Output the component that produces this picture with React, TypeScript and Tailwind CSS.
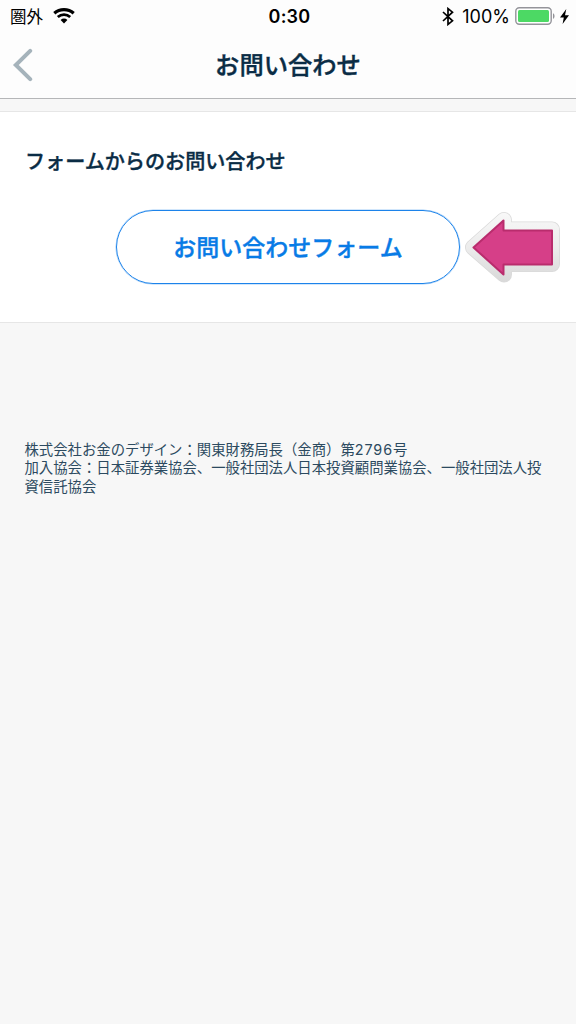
import React from "react";

const StatusBar = () => {
  return (
    <div className="grid h-8 grid-cols-3 items-center pr-[7px] pl-[10px] text-black">
      <div className="flex items-center gap-[10px]">
        <span className="text-[16.5px] leading-none">圏外</span>
        <svg width="22" height="16" viewBox="0 0 22 16" fill="none" stroke="currentColor">
          <path d="M1.3 5.3C6.8.5 15.2.5 20.7 5.3" strokeWidth="3.2" />
          <path d="M4.8 9C8.4 5.8 13.6 5.8 17.2 9" strokeWidth="2.8" />
          <path d="M7.6 11.9c2-1.8 4.8-1.8 6.8 0L11 15.4z" fill="currentColor" stroke="none" />
        </svg>
      </div>
      <span className="pt-px text-center font-['Inter','Noto_Sans_CJK_JP',sans-serif] text-[18px] leading-none font-semibold tracking-[0.2px]">
        0:30
      </span>
      <div className="flex items-center justify-end">
        <svg width="12" height="19" viewBox="0 0 12 19" fill="none" stroke="currentColor" strokeWidth="1.7">
          <path d="M1 5l9.5 8.8L6 17.4V1.6l4.5 3.6L1 14" />
        </svg>
        <span className="ml-[8px] pt-px font-['Inter',sans-serif] text-[18px] leading-none">100%</span>
        <svg className="ml-[5px]" width="40" height="18" viewBox="0 0 40 18">
          <rect x="0.8" y="0.8" width="35.4" height="16.4" rx="3.5" fill="white" stroke="#94949a" strokeWidth="1.4" />
          <rect x="3" y="3" width="31" height="12" rx="1.5" fill="#4cd964" />
          <path d="M38 6.2c2 .8 2 4.8 0 5.6z" fill="#94949a" />
        </svg>
        <svg className="ml-[5px]" width="9" height="15" viewBox="0 0 9 15" fill="currentColor">
          <path d="M6.3 0L0 8.4h3.8L2.6 15 9 6.2H5z" />
        </svg>
      </div>
    </div>
  );
};

const Header = () => {
  return (
    <header className="h-[99px] border-b border-[#b5b6b8] bg-[#fdfdfd]">
      <StatusBar />
      <div className="grid h-[65px] grid-cols-[48px_1fr_48px] items-center">
        <button aria-label="戻る" className="pl-[11px]">
          <svg width="22" height="34" viewBox="0 0 22 34" fill="none" stroke="#a5b3bb" strokeWidth="4">
            <path d="M19.2 2.8L4.8 17l14.4 14.2" strokeLinecap="round" />
          </svg>
        </button>
        <h1 className="text-center text-[24.3px] leading-none font-medium text-[#0a2c45] [-webkit-text-stroke:0.4px]">
          お問い合わせ
        </h1>
      </div>
    </header>
  );
};

const PointerArrow = () => {
  return (
    <svg width="98" height="76" viewBox="0 0 98 76" strokeLinejoin="round">
      <defs>
        <linearGradient id="sticker" gradientUnits="userSpaceOnUse" x1="0" y1="2" x2="0" y2="73">
          <stop offset="0" stopColor="#f8f8f8" />
          <stop offset="0.5" stopColor="#ececec" />
          <stop offset="1" stopColor="#d8d8d8" />
        </linearGradient>
      </defs>
      <path d="M8 37.5L39 10V19.5H87V54H39V64.5Z" stroke="#dadada" strokeWidth="16" />
      <path d="M8 37.5L39 10V19.5H87V54H39V64.5Z" stroke="url(#sticker)" strokeWidth="14.4" />
      <path
        d="M8.5 37.5L38.5 10.5V20.5H87V54.5H38.5V64.5Z"
        fill="#d63f88"
        stroke="#b92c6d"
        strokeWidth="2"
      />
    </svg>
  );
};

const ContactForm = () => {
  return (
    <section className="mt-[12px] h-[212px] border-y border-[#e6e6e6] bg-white pt-[38px]">
      <h2 className="pl-[25px] text-[20.1px] leading-[22px] font-medium text-[#0a2c45] [-webkit-text-stroke:0.35px]">
        フォームからのお問い合わせ
      </h2>
      <div className="relative mt-[38px] flex justify-center">
        <button className="h-[74px] w-[344px] rounded-full border-[1.5px] border-[#1c83ea] pb-[1px] text-[23px] font-medium text-[#087be6] ring-[0.5px] ring-[#1c83ea]/40 [-webkit-text-stroke:0.4px]">
          お問い合わせフォーム
        </button>
        <div className="absolute top-0 left-[465px]">
          <PointerArrow />
        </div>
      </div>
    </section>
  );
};

export default function App() {
  return (
    <div className="min-h-screen bg-[#f7f7f7] font-['Noto_Sans_CJK_JP',sans-serif]">
      <Header />
      <ContactForm />
      <footer className="px-[24.5px] pt-[118px] font-['Inter','Noto_Sans_CJK_JP',sans-serif] text-[14.36px] leading-[18.3px] text-[#2c4a60]">
        <p>
          株式会社お金のデザイン：関東財務局長（金商）第<span className="tracking-[0.9px]">2796</span>号
        </p>
        <p>加入協会：日本証券業協会、一般社団法人日本投資顧問業協会、一般社団法人投資信託協会</p>
      </footer>
    </div>
  );
}
